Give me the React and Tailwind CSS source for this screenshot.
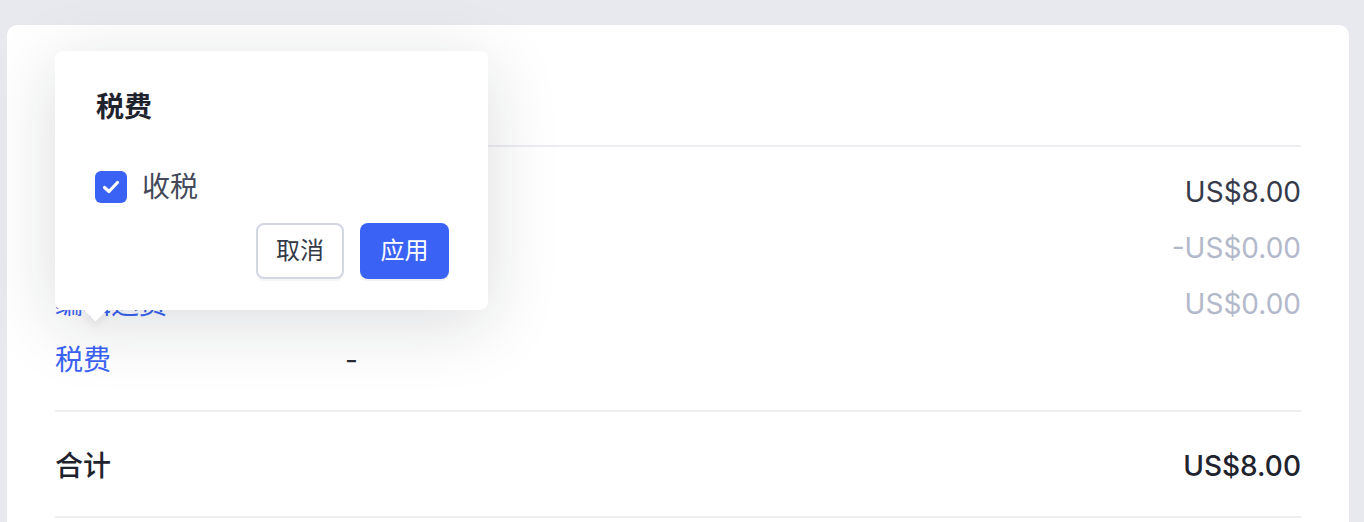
import React from 'react';

const FONT = { fontFamily: 'Inter, "Noto Sans CJK SC", sans-serif' };

const rows = [
  { label: '小计', link: false, mid: '1 件商品', value: 'US$8.00', muted: false },
  { label: '添加折扣', link: true, mid: '-', value: '-US$0.00', muted: true },
  { label: '编辑运费', link: true, mid: '-', value: 'US$0.00', muted: true },
  { label: '税费', link: true, mid: '-', value: '', muted: false },
];

const TaxPopover = () => (
  <div className="absolute left-[55px] top-[51px] w-[433px] h-[259px] bg-white rounded-[8px] shadow-[0_14px_70px_rgba(20,24,40,0.15)] pl-[41px] pr-[39px] pt-[38px]">
    <div className="text-[28px] leading-[36px] font-semibold text-[#1f232e]">税费</div>
    <label className="mt-[46px] flex items-center gap-[15px]">
      <span className="w-[32px] h-[32px] -ml-[1px] rounded-[6px] bg-[#3a63f6] flex items-center justify-center">
        <svg width="18" height="14" viewBox="0 0 18 14" fill="none">
          <path d="M2.5 7.5 L7 11.5 L15.5 2.5" stroke="white" strokeWidth="3.2" strokeLinecap="round" strokeLinejoin="round" />
        </svg>
      </span>
      <span className="text-[28px] leading-[32px] text-[#434958]">收税</span>
    </label>
    <div className="mt-[20px] flex justify-end gap-[16px]">
      <button className="w-[88px] h-[56px] rounded-[8px] border-2 border-[#d3d7e3] bg-white text-[24px] text-[#343a48] shadow-[0_2px_0_rgba(0,0,0,0.04)]">
        取消
      </button>
      <button className="w-[89px] h-[56px] rounded-[8px] bg-[#3a63f6] text-[24px] text-white shadow-[0_2px_0_rgba(0,0,0,0.05)]">
        应用
      </button>
    </div>
    <div className="absolute left-[32px] bottom-[-8px] w-[17px] h-[17px] bg-white rotate-45 shadow-[4px_4px_8px_rgba(20,24,40,0.06)]" />
  </div>
);

export default function App() {
  return (
    <div className="relative w-[1364px] h-[522px] overflow-hidden bg-[#e8e9ee] pt-[25px] pl-[7px] pr-[15px]" style={FONT}>
      <div className="bg-white rounded-t-[10px] px-[48px] h-[600px]">
        <div className="h-[122px] border-b-2 border-[#eceef2] flex items-center">
          <span className="text-[28px] font-semibold text-[#1f232e]">摘要</span>
        </div>
        <div className="pt-[17px] pb-[22px] border-b-2 border-[#eceef2]">
          {rows.map((r) => (
            <div key={r.label} className="h-[56px] flex items-center text-[28px]">
              <span className={`w-[290px] ${r.link ? 'text-[#3b63f4]' : 'text-[#272b36]'}`}>{r.label}</span>
              <span className="flex-1 text-[#272b36]">{r.mid}</span>
              <span className={r.muted ? 'text-[#b3b9ca]' : 'text-[#353b4a]'}>{r.value}</span>
            </div>
          ))}
        </div>
        <div className="h-[106px] pt-[3px] border-b-2 border-[#eceef2] flex items-center justify-between text-[28px] font-medium text-[#1f232e]">
          <span>合计</span>
          <span>US$8.00</span>
        </div>
      </div>
      <TaxPopover />
    </div>
  );
}
